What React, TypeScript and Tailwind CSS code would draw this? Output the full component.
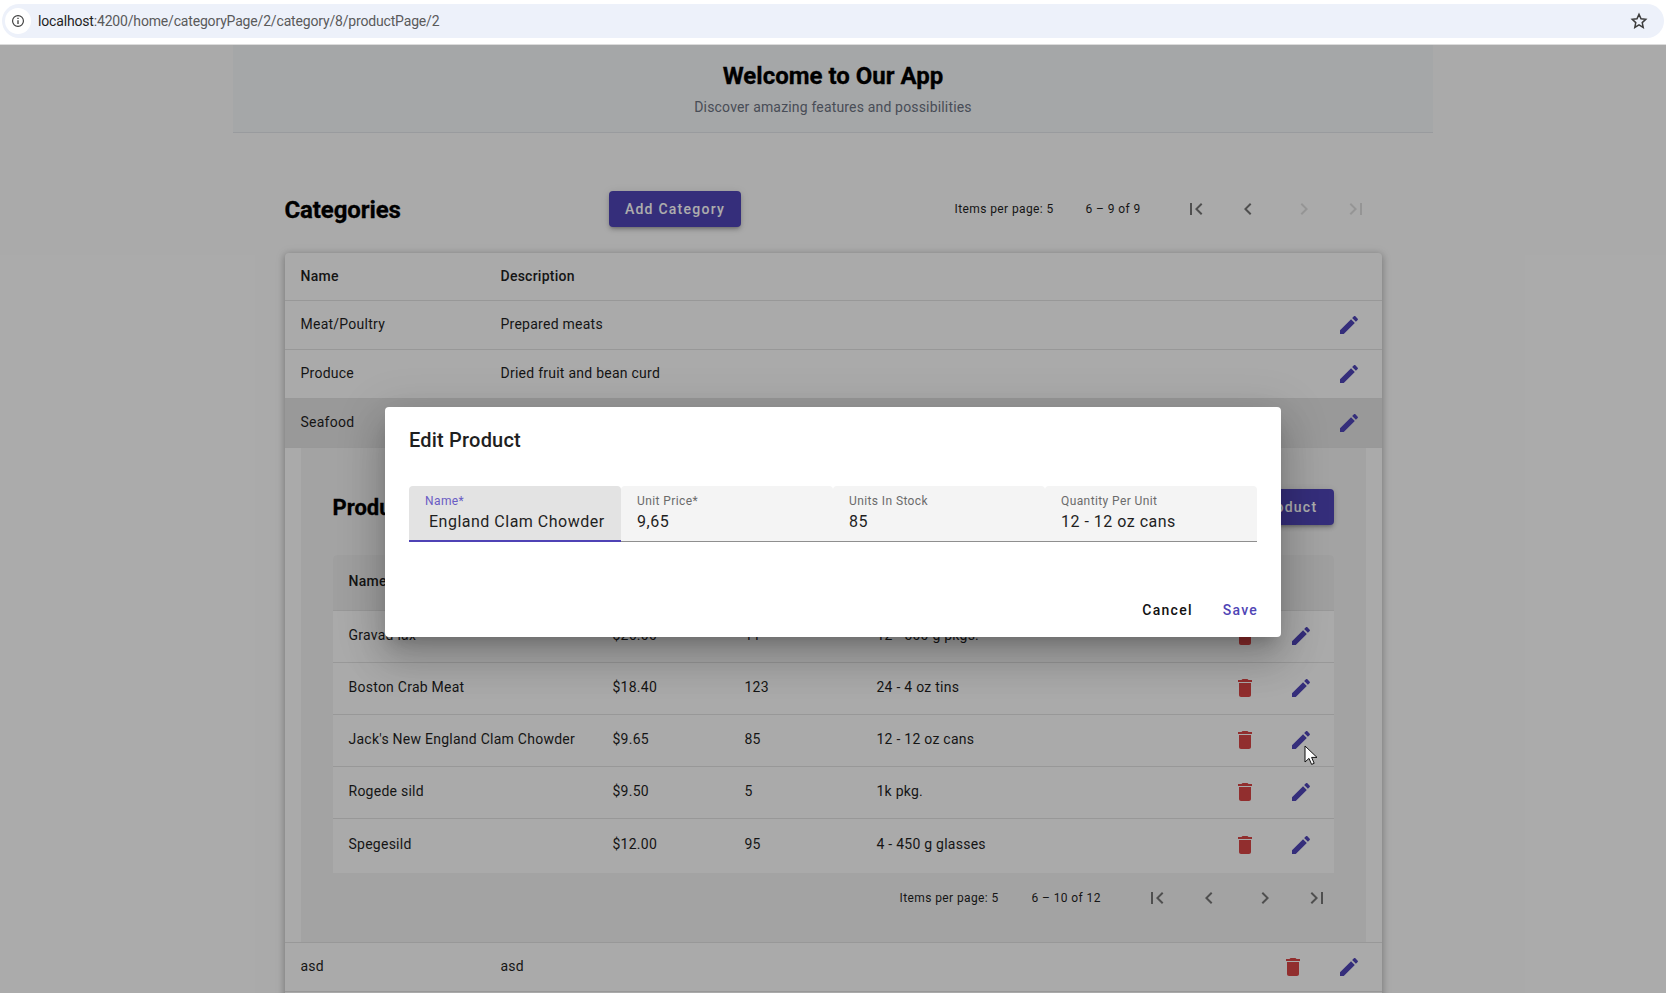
const PATHS = {
  first: "M18.41 16.59L13.82 12l4.59-4.59L17 6l-6 6 6 6zM6 6h2v12H6z",
  last: "M5.59 7.41L10.18 12l-4.59 4.59L7 18l6-6-6-6zM16 6h2v12h-2z",
  left: "M15.41 7.41L14 6l-6 6 6 6 1.41-1.41L10.83 12z",
  right: "M10 6L8.59 7.41 13.17 12l-4.58 4.59L10 18l6-6z",
  edit: "M3 17.25V21h3.75L17.81 9.94l-3.75-3.75L3 17.25zM20.71 7.04c.39-.39.39-1.02 0-1.41l-2.34-2.34c-.39-.39-1.02-.39-1.41 0l-1.83 1.83 3.75 3.75 1.83-1.83z",
  del: "M6 19c0 1.1.9 2 2 2h8c1.1 0 2-.9 2-2V7H6v12zM19 4h-3.5l-1-1h-5l-1 1H5v2h14V4z",
};

function Icon({ d, className }: { d: string; className: string }) {
  return (
    <svg viewBox="0 0 24 24" className={"w-6 h-6 shrink-0 fill-current " + className}>
      <path d={d} />
    </svg>
  );
}

function Pager({ info, gap }: { info: string; gap: string }) {
  return (
    <div className="flex items-center text-xs tracking-[0.4px] text-[#1f1f1f]">
      <span className="w-[100px] whitespace-nowrap">Items per page: 5</span>
      <span className={gap}>{info}</span>
    </div>
  );
}

function PagerIcons({ disabledNext }: { disabledNext?: boolean }) {
  const next = disabledNext ? "text-[#dcdcdc]" : "text-[#757575]";
  return (
    <div className="flex items-center">
      <Icon d={PATHS.first} className="text-[#757575]" />
      <Icon d={PATHS.left} className="text-[#757575] ml-[28px]" />
      <Icon d={PATHS.right} className={next + " ml-[32px]"} />
      <Icon d={PATHS.last} className={next + " ml-[28px]"} />
    </div>
  );
}

function CatRow({ name, desc, active, del }: { name: string; desc: string; active?: boolean; del?: boolean }) {
  return (
    <div className={"h-[49px] flex items-center border-b border-[#e0e0e0] pl-[16px] pr-[21px] " + (active ? "bg-[#e2e2e2]" : "")}>
      <span className="w-[200px] pb-[2px]">{name}</span>
      <span className="flex-1 pb-[2px]">{desc}</span>
      {del && <Icon d={PATHS.del} className="text-[#d64545] mr-8" />}
      <Icon d={PATHS.edit} className="text-[#4f45b5]" />
    </div>
  );
}

function ProductRow({ name, price, stock, qty, h }: { name: string; price: string; stock: string; qty: string; h: string }) {
  return (
    <div className={"flex items-center border-b border-[#e0e0e0] pl-[16px] pr-[21px] " + h}>
      <span className="w-[264px] pb-[4px]">{name}</span>
      <span className="w-[132px] pb-[4px]">{price}</span>
      <span className="w-[132px] pb-[4px]">{stock}</span>
      <span className="flex-1 pb-[4px]">{qty}</span>
      <Icon d={PATHS.del} className="text-[#d64545] mr-8 mb-[2px]" />
      <Icon d={PATHS.edit} className="text-[#4f45b5] mb-[2px]" />
    </div>
  );
}

function Field({ label, value, focused, indent }: { label: string; value: string; focused?: boolean; indent?: boolean }) {
  return (
    <div
      className={
        "w-[212px] h-[56px] rounded-t pl-[16px] flex flex-col whitespace-nowrap overflow-hidden " +
        (focused ? "bg-[#e3e3e3] border-b-2 border-[#4f42b5]" : "bg-[#f4f4f4] border-b border-[#8f8f8f]")
      }
    >
      <span className={"text-xs leading-4 mt-[7px] tracking-[0.4px] " + (focused ? "text-[#6a5cc4]" : "text-[#6b6b6b]")}>{label}</span>
      <span className={"text-base leading-6 tracking-[0.5px] text-[#1f1f1f] mt-[1px] " + (indent ? "pl-1" : "")}>{value}</span>
    </div>
  );
}

export default function App() {
  return (
    <div className="relative w-[1666px] h-[993px] overflow-hidden bg-[#fbfbfb] text-sm tracking-[0.25px] text-[#1f1f1f] font-['Roboto',sans-serif]">
      <div className="h-[45px] bg-white border-b border-[#dcdcdc] pt-1 pl-[2px] pr-[2px]">
        <div className="h-[34px] rounded-full bg-[#edf1fa] flex items-center">
          <div className="w-[26px] h-[26px] ml-[3px] rounded-full bg-white flex items-center justify-center">
            <svg viewBox="0 0 16 16" className="w-[14px] h-[14px] fill-none stroke-[#3c3c3c]">
              <circle cx="8" cy="8" r="6.2" strokeWidth="1.3" />
              <path d="M8 7v4.4M8 4.4v1.4" strokeWidth="1.5" />
            </svg>
          </div>
          <span className="ml-[7px] text-sm tracking-[-0.17px] text-[#5a5a5a]">
            <span className="text-[#1f1f1f]">localhost</span>:4200/home/categoryPage/2/category/8/productPage/2
          </span>
          <svg viewBox="0 0 24 24" className="ml-auto mr-[16px] w-[18px] h-[18px] fill-none stroke-[#3c3c3c]" strokeWidth="2">
            <path d="M12 3.2l2.7 5.9 6.3.7-4.7 4.3 1.3 6.4L12 17.2l-5.6 3.3 1.3-6.4L3 9.8l6.3-.7z" />
          </svg>
        </div>
      </div>

      <header className="mx-auto w-[1200px] h-[88px] bg-[#f4f6f8] border-b border-[#e2e5e9] flex flex-col items-center">
        <h1 className="mt-[15px] text-2xl leading-8 font-bold tracking-[0px] text-black [-webkit-text-stroke:0.3px_black]">Welcome to Our App</h1>
        <p className="mt-[5px] text-sm leading-5 text-[#6b7280] tracking-[0.17px]">Discover amazing features and possibilities</p>
      </header>

      <main className="mx-auto w-[1097px] pt-[58px]">
        <div className="flex items-center h-[36px]">
          <h2 className="w-[324px] pt-[2px] text-2xl font-bold tracking-[-0.1px] text-black [-webkit-text-stroke:0.3px_black]">Categories</h2>
          <button className="w-[132px] h-[36px] pl-px rounded bg-[#4f45b5] text-white font-medium tracking-[1.25px] shadow-[0_3px_3px_-2px_rgba(0,0,0,0.2),0_3px_4px_0_rgba(0,0,0,0.14),0_1px_8px_0_rgba(0,0,0,0.12)]">Add Category</button>
          <div className="ml-[214px]">
            <Pager info="6 – 9 of 9" gap="ml-[31px]" />
          </div>
          <div className="ml-[43px]">
            <PagerIcons disabledNext />
          </div>
        </div>

        <section className="mt-[26px] rounded-t bg-[#fbfbfb] shadow-[0_2px_6px_1px_rgba(0,0,0,0.16),0_1px_8px_2px_rgba(0,0,0,0.1)]">
          <div className="h-[48px] flex items-center border-b border-[#e0e0e0] pl-[16px] pb-[1px] font-medium">
            <span className="w-[200px]">Name</span>
            <span>Description</span>
          </div>
          <CatRow name="Meat/Poultry" desc="Prepared meats" />
          <CatRow name="Produce" desc="Dried fruit and bean curd" />
          <CatRow name="Seafood" desc="Seaweed and fish" active />

          <div className="h-[495px] border-b border-[#e0e0e0] px-[16px]">
            <div className="h-full bg-[#f1f1f1] px-[32px] pt-[41px]">
              <div className="flex items-center justify-between h-[36px]">
                <h3 className="pt-[2px] text-[22px] font-bold tracking-[0px] text-black [-webkit-text-stroke:0.3px_black]">Products</h3>
                <button className="w-[124px] h-[36px] rounded bg-[#4f45b5] text-white font-medium tracking-[1.25px] shadow-[0_3px_3px_-2px_rgba(0,0,0,0.2),0_3px_4px_0_rgba(0,0,0,0.14),0_1px_8px_0_rgba(0,0,0,0.12)]">Add Product</button>
              </div>
              <div className="mt-[30px] rounded-t bg-[#fbfbfb]">
                <div className="h-[56px] flex items-center bg-[#ebebeb] border-b border-[#e0e0e0] pl-[16px] pb-[3px] font-medium rounded-t">
                  <span className="w-[264px]">Name</span>
                  <span className="w-[132px]">Unit Price</span>
                  <span className="w-[132px]">Units In Stock</span>
                  <span>Quantity Per Unit</span>
                </div>
                <ProductRow name="Gravad lax" price="$26.00" stock="11" qty="12 - 500 g pkgs." h="h-[52px]" />
                <ProductRow name="Boston Crab Meat" price="$18.40" stock="123" qty="24 - 4 oz tins" h="h-[52px]" />
                <ProductRow name="Jack's New England Clam Chowder" price="$9.65" stock="85" qty="12 - 12 oz cans" h="h-[52px]" />
                <ProductRow name="Rogede sild" price="$9.50" stock="5" qty="1k pkg." h="h-[52px]" />
                <ProductRow name="Spegesild" price="$12.00" stock="95" qty="4 - 450 g glasses" h="h-[54px] border-b-0" />
              </div>
              <div className="flex items-center mt-[13px] h-[24px]">
                <div className="ml-[567px]">
                  <Pager info="6 – 10 of 12" gap="ml-[32px]" />
                </div>
                <div className="ml-[44px]">
                  <PagerIcons />
                </div>
              </div>
            </div>
          </div>

          <CatRow name="asd" desc="asd" del />
          <div className="h-[20px]" />
        </section>
      </main>

      <div className="absolute inset-x-0 top-[45px] bottom-0 bg-black/[0.32] flex items-center justify-center pt-[5px]">
        <div className="w-[896px] h-[230px] rounded bg-white px-6 flex flex-col shadow-[0_11px_15px_-7px_rgba(0,0,0,0.2),0_24px_38px_3px_rgba(0,0,0,0.14),0_9px_46px_8px_rgba(0,0,0,0.12)]">
          <h2 className="mt-[17px] text-xl leading-8 font-medium tracking-[0.2px] text-[#1f1f1f]">Edit Product</h2>
          <div className="flex mt-[30px]">
            <Field label="Name*" value="England Clam Chowder" focused indent />
            <Field label="Unit Price*" value="9,65" />
            <Field label="Units In Stock" value="85" />
            <Field label="Quantity Per Unit" value="12 - 12 oz cans" />
          </div>
          <div className="flex justify-end mt-[58px] -mr-px font-medium tracking-[1.25px] leading-5">
            <button className="text-[#111]">Cancel</button>
            <button className="ml-[30px] text-[#4f45b5]">Save</button>
          </div>
        </div>
      </div>

      <svg viewBox="0 0 14 22" className="absolute left-[1304px] top-[745px] w-[14px] h-[22px]">
        <path d="M1 1v16l4-3.6 2.6 6 2.6-1.1-2.6-5.9H13z" fill="#fff" stroke="#111" strokeWidth="1" />
      </svg>
    </div>
  );
}
